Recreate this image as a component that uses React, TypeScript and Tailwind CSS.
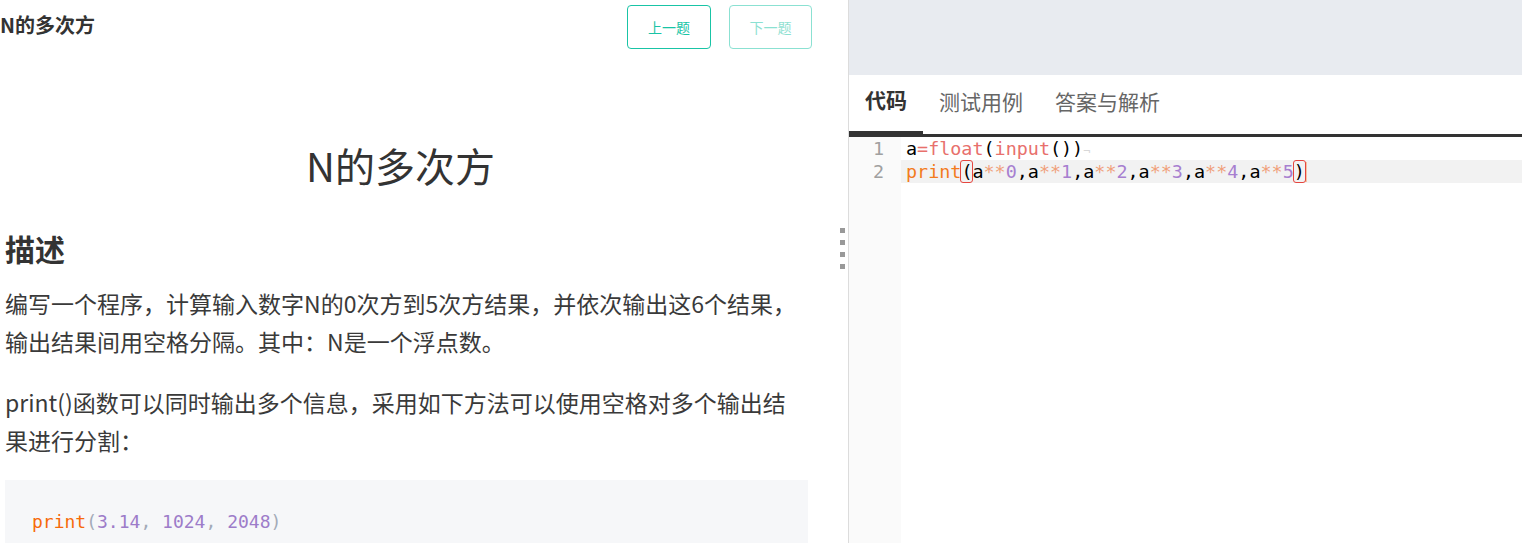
import React from "react";

const cjk = { fontFamily: '"Noto Sans CJK SC", "Noto Sans", sans-serif' };
const mono = { fontFamily: '"DejaVu Sans Mono", "Liberation Mono", monospace' };

const Match = ({ children }: { children: React.ReactNode }) => (
    <span className="outline outline-1 outline-[#e5463f] rounded-[2px]">{children}</span>
);

const App = () => {
    const tabs = ["代码", "测试用例", "答案与解析"];

    return (
        <div className="flex w-[1522px] h-[543px] overflow-hidden bg-white text-[#333]" style={cjk}>
            {/* left: problem statement */}
            <div className="relative w-[848px] shrink-0 flex flex-col">
                <div className="flex items-start justify-between pr-[36px] h-[50px]">
                    <div className="mt-[10px] text-[20px] leading-[30px] font-bold">N的多次方</div>
                    <div className="flex gap-[18px] mt-[5px]">
                        <button className="w-[84px] h-[44px] rounded-[4px] border border-[#19c4a6] text-[14px] text-[#19c4a6] bg-white">
                            上一题
                        </button>
                        <button className="w-[83px] h-[44px] rounded-[4px] border border-[#19c4a6] text-[14px] text-[#19c4a6] bg-white opacity-50">
                            下一题
                        </button>
                    </div>
                </div>

                <div className="ml-[5px] mr-[40px] flex flex-col">
                    <h1 className="mt-[86px] pr-[12px] text-center text-[40px] leading-[60px] font-normal">N的多次方</h1>
                    <h2 className="mt-[31px] text-[30px] leading-[45px] font-bold">描述</h2>
                    <p className="mt-[13px] text-[23px] leading-[38.4px] text-[#3a3a3a]">
                        编写一个程序，计算输入数字N的0次方到5次方结果，并依次输出这6个结果，
                        <br />
                        输出结果间用空格分隔。其中：N是一个浮点数。
                    </p>
                    <p className="mt-[22px] text-[23px] leading-[38.4px] text-[#3a3a3a]">
                        print()函数可以同时输出多个信息，采用如下方法可以使用空格对多个输出结
                        <br />
                        果进行分割：
                    </p>
                    <div className="mt-[20px] h-[120px] bg-[#f6f7f9] pt-[28px] pl-[27px] text-[18px] leading-[27px]" style={mono}>
                        <span className="text-[#f66a0a]">print</span>
                        <span className="text-[#a3abb8]">(</span>
                        <span className="text-[#9d7cc9]">3.14</span>
                        <span className="text-[#a3abb8]">, </span>
                        <span className="text-[#9d7cc9]">1024</span>
                        <span className="text-[#a3abb8]">, </span>
                        <span className="text-[#9d7cc9]">2048</span>
                        <span className="text-[#a3abb8]">)</span>
                    </div>
                </div>

                {/* resize handle */}
                <div className="absolute right-[3px] top-[228px] flex flex-col gap-[7px]">
                    <div className="w-[5px] h-[5px] bg-[#999]"></div>
                    <div className="w-[5px] h-[5px] bg-[#999]"></div>
                    <div className="w-[5px] h-[5px] bg-[#999]"></div>
                    <div className="w-[5px] h-[5px] bg-[#999]"></div>
                </div>
            </div>

            {/* right: editor */}
            <div className="flex-1 flex flex-col border-l border-[#dcdcdc]">
                <div className="h-[75px] bg-[#e8ebf0]"></div>
                <div className="flex h-[59px] items-end">
                    {tabs.map((tab, i) => (
                        <div
                            key={tab}
                            className={`h-full flex items-center px-[16px] pb-[6px] text-[21px] ${
                                i === 0 ? "font-bold text-[#333] border-b-[3px] border-[#333]" : "text-[#666]"
                            }`}
                        >
                            {tab}
                        </div>
                    ))}
                </div>
                <div className="h-[3px] bg-[#333]"></div>

                <div className="flex-1 flex text-[18.4px] leading-[23px]" style={mono}>
                    <div className="w-[52px] shrink-0 bg-[#fafafa] text-right pr-[17px] text-[#a0a0a0]">
                        <div className="h-[23px]">1</div>
                        <div className="h-[23px]">2</div>
                    </div>
                    <div className="flex-1 text-black whitespace-pre">
                        <div className="h-[23px] pl-[5px] overflow-hidden">
                            a<span className="text-[#e8706c]">=float</span>(<span className="text-[#e8706c]">input</span>())
                            <span className="text-[#d8d8d8] text-[12px] leading-[0]">¬</span>
                        </div>
                        <div className="h-[23px] pl-[5px] bg-[#f2f2f2] overflow-hidden">
                            <span className="text-[#f37b1d]">print</span>
                            <Match>(</Match>a<span className="text-[#f0a07a]">**</span><span className="text-[#a77fd0]">0</span>,a
                            <span className="text-[#f0a07a]">**</span><span className="text-[#a77fd0]">1</span>,a
                            <span className="text-[#f0a07a]">**</span><span className="text-[#a77fd0]">2</span>,a
                            <span className="text-[#f0a07a]">**</span><span className="text-[#a77fd0]">3</span>,a
                            <span className="text-[#f0a07a]">**</span><span className="text-[#a77fd0]">4</span>,a
                            <span className="text-[#f0a07a]">**</span><span className="text-[#a77fd0]">5</span>
                            <Match>)</Match>
                            <span className="inline-block w-[2px] h-[20px] align-[-4px] bg-[#f5c3a2]"></span>
                        </div>
                    </div>
                </div>
            </div>
        </div>
    );
};

export default App;
